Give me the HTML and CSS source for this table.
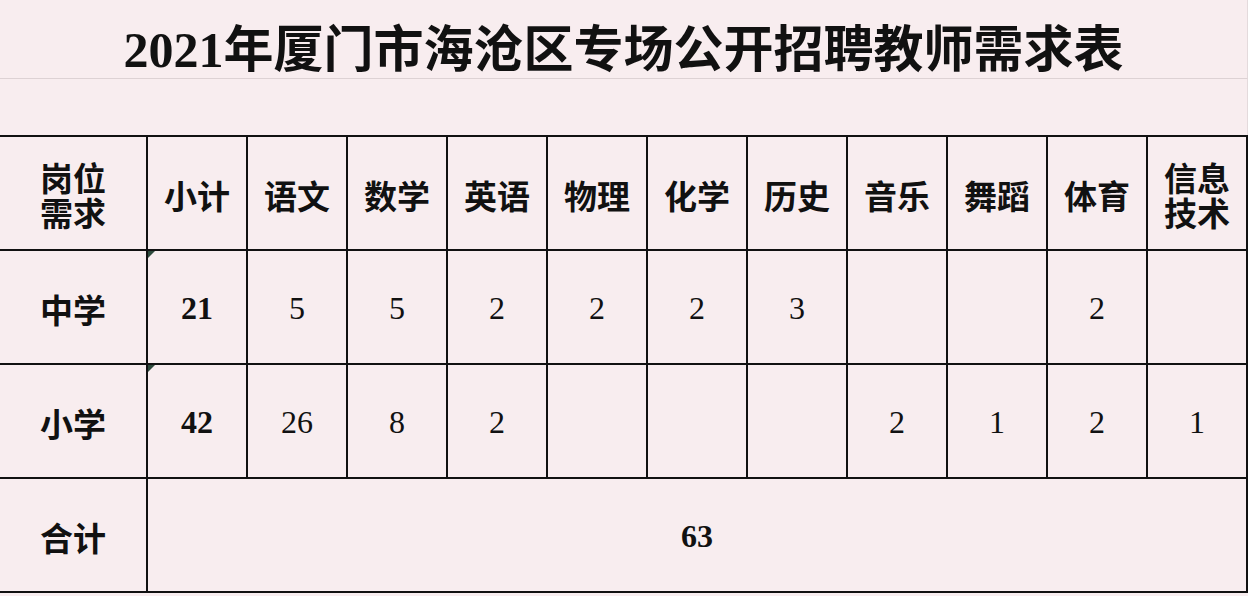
FILE: index.html
```html
<!DOCTYPE html>
<html lang="zh">
<head>
<meta charset="utf-8">
<title>2021年厦门市海沧区专场公开招聘教师需求表</title>
<link rel="stylesheet" href="styles.css">
</head>
<body>
<div class="page">
  <div class="title">2021年厦门市海沧区专场公开招聘教师需求表</div>
  <div class="spacer"></div>
  <div class="grid">
    <div class="cell head two">岗位<br>需求</div>
    <div class="cell head">小计</div>
    <div class="cell head">语文</div>
    <div class="cell head">数学</div>
    <div class="cell head">英语</div>
    <div class="cell head">物理</div>
    <div class="cell head">化学</div>
    <div class="cell head">历史</div>
    <div class="cell head">音乐</div>
    <div class="cell head">舞蹈</div>
    <div class="cell head">体育</div>
    <div class="cell head two">信息<br>技术</div>

    <div class="cell head">中学</div>
    <div class="cell num bold mark">21</div>
    <div class="cell num">5</div>
    <div class="cell num">5</div>
    <div class="cell num">2</div>
    <div class="cell num">2</div>
    <div class="cell num">2</div>
    <div class="cell num">3</div>
    <div class="cell num"></div>
    <div class="cell num"></div>
    <div class="cell num">2</div>
    <div class="cell num"></div>

    <div class="cell head">小学</div>
    <div class="cell num bold mark">42</div>
    <div class="cell num">26</div>
    <div class="cell num">8</div>
    <div class="cell num">2</div>
    <div class="cell num"></div>
    <div class="cell num"></div>
    <div class="cell num"></div>
    <div class="cell num">2</div>
    <div class="cell num">1</div>
    <div class="cell num">2</div>
    <div class="cell num">1</div>

    <div class="cell head">合计</div>
    <div class="cell num bold span">63</div>
  </div>
</div>
</body>
</html>
```

FILE: styles.css
```css
html, body {
  margin: 0;
  padding: 0;
  background: #f8edef;
}

.page {
  width: 1248px;
  height: 596px;
  overflow: hidden;
  background: #f8edef;
  color: #111;
}

.title {
  box-sizing: border-box;
  height: 79px;
  padding-top: 22px;
  line-height: 56px;
  text-align: center;
  font-family: "Liberation Serif", "Noto Sans CJK SC", serif;
  font-weight: 700;
  font-size: 50px;
  border-bottom: 1px solid #ddd2d4;
  border-right: 1px solid #e4dadc;
}

.spacer {
  height: 56px;
  border-right: 1px solid #e4dadc;
}

.grid {
  display: grid;
  grid-template-columns: 148px repeat(11, 100px);
  grid-template-rows: repeat(4, 114px);
  border-top: 2px solid #111;
}

.cell {
  position: relative;
  box-sizing: border-box;
  border-right: 2px solid #111;
  border-bottom: 2px solid #111;
  display: flex;
  align-items: center;
  justify-content: center;
  text-align: center;
}

.head {
  font-family: "Noto Sans CJK SC", sans-serif;
  font-weight: 700;
  font-size: 33px;
  line-height: 35px;
  padding-top: 4px;
}

.num {
  font-family: "Liberation Serif", "Noto Sans CJK SC", serif;
  font-size: 32px;
  font-weight: 400;
  padding-top: 2px;
}

.bold {
  font-weight: 700;
}

.span {
  grid-column: 2 / span 11;
}

.mark::before {
  content: "";
  position: absolute;
  left: 0;
  top: 0;
  width: 0;
  height: 0;
  border-top: 7px solid #2d4a3c;
  border-right: 7px solid transparent;
}
```
